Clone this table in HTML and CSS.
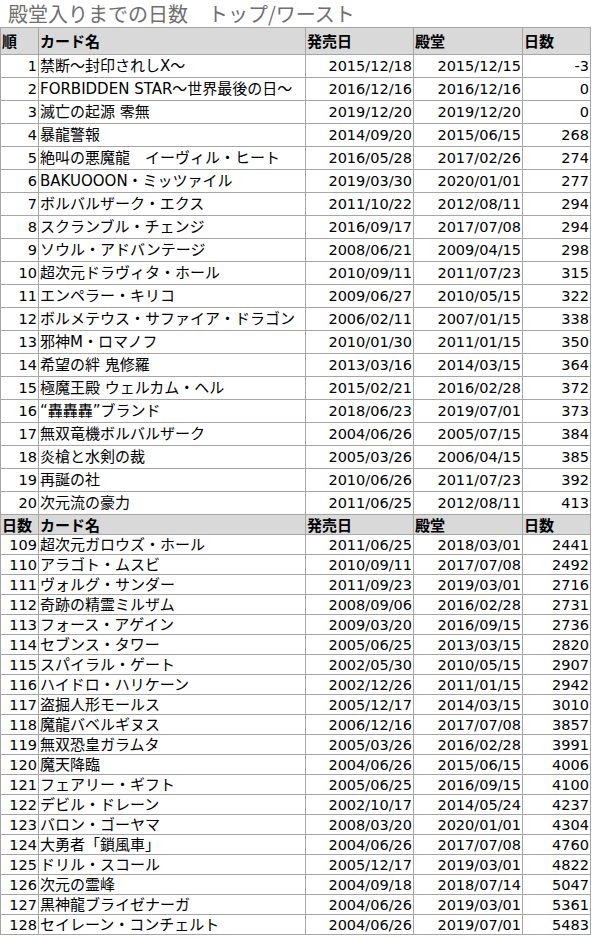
FILE: index.html
```html
<!DOCTYPE html>
<html lang="ja">
<head>
<meta charset="utf-8">
<title>殿堂入りまでの日数</title>
<link rel="stylesheet" href="styles.css">
</head>
<body>
<div class="title">殿堂入りまでの日数　トップ/ワースト</div>
<div class="grid top">
<div class="c hd">順</div><div class="c hd">カード名</div><div class="c hd">発売日</div><div class="c hd">殿堂</div><div class="c hd">日数</div>
<div class="c n">1</div><div class="c">禁断～封印されしX～</div><div class="c n">2015/12/18</div><div class="c n">2015/12/15</div><div class="c n">-3</div>
<div class="c n">2</div><div class="c">FORBIDDEN STAR～世界最後の日～</div><div class="c n">2016/12/16</div><div class="c n">2016/12/16</div><div class="c n">0</div>
<div class="c n">3</div><div class="c">滅亡の起源 零無</div><div class="c n">2019/12/20</div><div class="c n">2019/12/20</div><div class="c n">0</div>
<div class="c n">4</div><div class="c">暴龍警報</div><div class="c n">2014/09/20</div><div class="c n">2015/06/15</div><div class="c n">268</div>
<div class="c n">5</div><div class="c">絶叫の悪魔龍　イーヴィル・ヒート</div><div class="c n">2016/05/28</div><div class="c n">2017/02/26</div><div class="c n">274</div>
<div class="c n">6</div><div class="c">BAKUOOON・ミッツァイル</div><div class="c n">2019/03/30</div><div class="c n">2020/01/01</div><div class="c n">277</div>
<div class="c n">7</div><div class="c">ボルバルザーク・エクス</div><div class="c n">2011/10/22</div><div class="c n">2012/08/11</div><div class="c n">294</div>
<div class="c n">8</div><div class="c">スクランブル・チェンジ</div><div class="c n">2016/09/17</div><div class="c n">2017/07/08</div><div class="c n">294</div>
<div class="c n">9</div><div class="c">ソウル・アドバンテージ</div><div class="c n">2008/06/21</div><div class="c n">2009/04/15</div><div class="c n">298</div>
<div class="c n">10</div><div class="c">超次元ドラヴィタ・ホール</div><div class="c n">2010/09/11</div><div class="c n">2011/07/23</div><div class="c n">315</div>
<div class="c n">11</div><div class="c">エンペラー・キリコ</div><div class="c n">2009/06/27</div><div class="c n">2010/05/15</div><div class="c n">322</div>
<div class="c n">12</div><div class="c">ボルメテウス・サファイア・ドラゴン</div><div class="c n">2006/02/11</div><div class="c n">2007/01/15</div><div class="c n">338</div>
<div class="c n">13</div><div class="c">邪神M・ロマノフ</div><div class="c n">2010/01/30</div><div class="c n">2011/01/15</div><div class="c n">350</div>
<div class="c n">14</div><div class="c">希望の絆 鬼修羅</div><div class="c n">2013/03/16</div><div class="c n">2014/03/15</div><div class="c n">364</div>
<div class="c n">15</div><div class="c">極魔王殿 ウェルカム・ヘル</div><div class="c n">2015/02/21</div><div class="c n">2016/02/28</div><div class="c n">372</div>
<div class="c n">16</div><div class="c">“轟轟轟”ブランド</div><div class="c n">2018/06/23</div><div class="c n">2019/07/01</div><div class="c n">373</div>
<div class="c n">17</div><div class="c">無双竜機ボルバルザーク</div><div class="c n">2004/06/26</div><div class="c n">2005/07/15</div><div class="c n">384</div>
<div class="c n">18</div><div class="c">炎槍と水剣の裁</div><div class="c n">2005/03/26</div><div class="c n">2006/04/15</div><div class="c n">385</div>
<div class="c n">19</div><div class="c">再誕の社</div><div class="c n">2010/06/26</div><div class="c n">2011/07/23</div><div class="c n">392</div>
<div class="c n">20</div><div class="c">次元流の豪力</div><div class="c n">2011/06/25</div><div class="c n">2012/08/11</div><div class="c n">413</div>
</div>
<div class="grid bottom">
<div class="c hd">日数</div><div class="c hd">カード名</div><div class="c hd">発売日</div><div class="c hd">殿堂</div><div class="c hd">日数</div>
<div class="c n">109</div><div class="c">超次元ガロウズ・ホール</div><div class="c n">2011/06/25</div><div class="c n">2018/03/01</div><div class="c n">2441</div>
<div class="c n">110</div><div class="c">アラゴト・ムスビ</div><div class="c n">2010/09/11</div><div class="c n">2017/07/08</div><div class="c n">2492</div>
<div class="c n">111</div><div class="c">ヴォルグ・サンダー</div><div class="c n">2011/09/23</div><div class="c n">2019/03/01</div><div class="c n">2716</div>
<div class="c n">112</div><div class="c">奇跡の精霊ミルザム</div><div class="c n">2008/09/06</div><div class="c n">2016/02/28</div><div class="c n">2731</div>
<div class="c n">113</div><div class="c">フォース・アゲイン</div><div class="c n">2009/03/20</div><div class="c n">2016/09/15</div><div class="c n">2736</div>
<div class="c n">114</div><div class="c">セブンス・タワー</div><div class="c n">2005/06/25</div><div class="c n">2013/03/15</div><div class="c n">2820</div>
<div class="c n">115</div><div class="c">スパイラル・ゲート</div><div class="c n">2002/05/30</div><div class="c n">2010/05/15</div><div class="c n">2907</div>
<div class="c n">116</div><div class="c">ハイドロ・ハリケーン</div><div class="c n">2002/12/26</div><div class="c n">2011/01/15</div><div class="c n">2942</div>
<div class="c n">117</div><div class="c">盗掘人形モールス</div><div class="c n">2005/12/17</div><div class="c n">2014/03/15</div><div class="c n">3010</div>
<div class="c n">118</div><div class="c">魔龍バベルギヌス</div><div class="c n">2006/12/16</div><div class="c n">2017/07/08</div><div class="c n">3857</div>
<div class="c n">119</div><div class="c">無双恐皇ガラムタ</div><div class="c n">2005/03/26</div><div class="c n">2016/02/28</div><div class="c n">3991</div>
<div class="c n">120</div><div class="c">魔天降臨</div><div class="c n">2004/06/26</div><div class="c n">2015/06/15</div><div class="c n">4006</div>
<div class="c n">121</div><div class="c">フェアリー・ギフト</div><div class="c n">2005/06/25</div><div class="c n">2016/09/15</div><div class="c n">4100</div>
<div class="c n">122</div><div class="c">デビル・ドレーン</div><div class="c n">2002/10/17</div><div class="c n">2014/05/24</div><div class="c n">4237</div>
<div class="c n">123</div><div class="c">バロン・ゴーヤマ</div><div class="c n">2008/03/20</div><div class="c n">2020/01/01</div><div class="c n">4304</div>
<div class="c n">124</div><div class="c">大勇者「鎖風車」</div><div class="c n">2004/06/26</div><div class="c n">2017/07/08</div><div class="c n">4760</div>
<div class="c n">125</div><div class="c">ドリル・スコール</div><div class="c n">2005/12/17</div><div class="c n">2019/03/01</div><div class="c n">4822</div>
<div class="c n">126</div><div class="c">次元の霊峰</div><div class="c n">2004/09/18</div><div class="c n">2018/07/14</div><div class="c n">5047</div>
<div class="c n">127</div><div class="c">黒神龍ブライゼナーガ</div><div class="c n">2004/06/26</div><div class="c n">2019/03/01</div><div class="c n">5361</div>
<div class="c n">128</div><div class="c">セイレーン・コンチェルト</div><div class="c n">2004/06/26</div><div class="c n">2019/07/01</div><div class="c n">5483</div>
</div>
</body>
</html>
```

FILE: styles.css
```css
html, body {
  margin: 0;
  padding: 0;
  background: #ffffff;
}
body {
  font-family: "DejaVu Sans", "Noto Sans CJK JP", sans-serif;
  color: #000000;
}
.title {
  height: 27px;
  line-height: 27px;
  padding-left: 8px;
  font-family: "Noto Sans CJK JP", sans-serif;
  font-size: 20px;
  color: #6f6f6f;
  white-space: nowrap;
  overflow: visible;
}
.grid {
  display: grid;
  grid-template-columns: 37px 266px 107px 108px 67px;
  gap: 1px;
  width: max-content;
  background: #a6a6a6;
  border: 1px solid #a6a6a6;
}
.grid.top {
  grid-template-rows: 26px;
  grid-auto-rows: 22px;
}
.grid.bottom {
  border-top: none;
  grid-auto-rows: 19px;
}
.c {
  background: #ffffff;
  font-size: 15px;
  line-height: 18px;
  white-space: nowrap;
  overflow: hidden;
  padding: 0 1px 0 1px;
  display: flex;
  align-items: center;
}
.n {
  justify-content: flex-end;
  font-size: 14.5px;
}
.hd {
  background: #d9d9d9;
  font-family: "Noto Sans CJK JP", sans-serif;
  font-weight: bold;
}
```
